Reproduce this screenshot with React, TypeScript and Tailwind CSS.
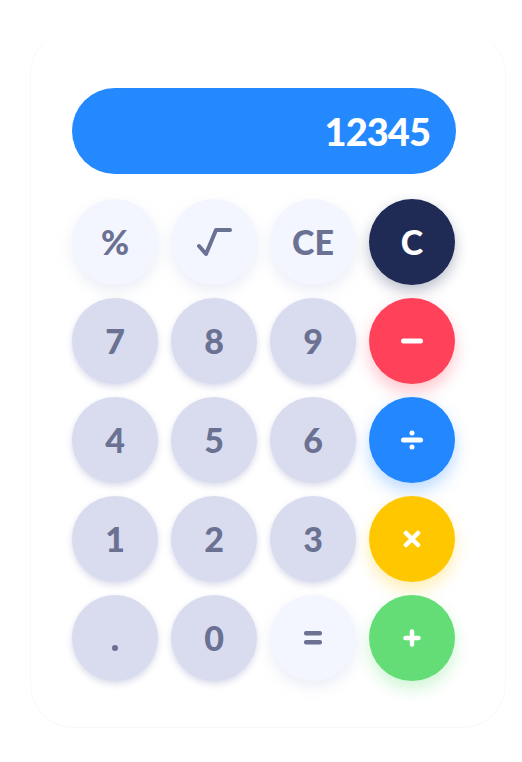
import React from "react";

type Key = {
  label: React.ReactNode;
  kind: "light" | "digit" | "dark" | "red" | "blue" | "yellow" | "green";
};

const kindClass: Record<Key["kind"], string> = {
  light: "bg-[#f3f6ff] text-[#6b7192] shadow-[0_6px_14px_rgba(180,188,220,0.25)]",
  digit: "bg-[#d8dcee] text-[#6b7192] shadow-[0_3px_6px_rgba(170,176,210,0.45)]",
  dark: "bg-[#1f2a55] text-white shadow-[0_6px_14px_rgba(31,42,85,0.3)]",
  red: "bg-[#ff4159] text-white shadow-[0_8px_16px_rgba(255,65,89,0.3)]",
  blue: "bg-[#2388ff] text-white shadow-[0_8px_16px_rgba(35,136,255,0.3)]",
  yellow: "bg-[#ffc700] text-white shadow-[0_8px_16px_rgba(255,199,0,0.3)]",
  green: "bg-[#64dd76] text-white shadow-[0_8px_16px_rgba(100,221,118,0.3)]",
};

const Sqrt = () => (
  <svg width="37" height="30" viewBox="0 0 37 30" fill="none" stroke="currentColor" strokeWidth="4" strokeLinecap="round" strokeLinejoin="round">
    <path d="M3 19 L10 27 L20 3 H34" />
  </svg>
);

const Minus = () => (
  <svg width="22" height="6" viewBox="0 0 22 6">
    <rect x="0" y="0.5" width="22" height="5" rx="2.5" fill="currentColor" />
  </svg>
);

const Divide = () => (
  <svg width="22" height="20" viewBox="0 0 22 20" fill="currentColor">
    <circle cx="11" cy="3" r="2.5" />
    <rect x="0" y="7.5" width="22" height="5" rx="2.5" />
    <circle cx="11" cy="17" r="2.5" />
  </svg>
);

const Times = () => (
  <svg width="18" height="18" viewBox="0 0 18 18" fill="none" stroke="currentColor" strokeWidth="4.5" strokeLinecap="round">
    <path d="M3 3 L15 15 M15 3 L3 15" />
  </svg>
);

const Plus = () => (
  <svg width="18" height="18" viewBox="0 0 18 18" fill="none" stroke="currentColor" strokeWidth="4.5" strokeLinecap="round">
    <path d="M9 2.5 V15.5 M2.5 9 H15.5" />
  </svg>
);

const Equals = () => (
  <svg width="18" height="14" viewBox="0 0 18 14" fill="currentColor">
    <rect x="0" y="0" width="18" height="4.5" rx="2" />
    <rect x="0" y="9" width="18" height="4.5" rx="2" />
  </svg>
);

const Dot = () => (
  <span className="mt-[20px] block h-[6px] w-[6px] rounded-full bg-current" />
);

const keys: Key[] = [
  { label: "%", kind: "light" },
  { label: <Sqrt />, kind: "light" },
  { label: "CE", kind: "light" },
  { label: "C", kind: "dark" },
  { label: "7", kind: "digit" },
  { label: "8", kind: "digit" },
  { label: "9", kind: "digit" },
  { label: <Minus />, kind: "red" },
  { label: "4", kind: "digit" },
  { label: "5", kind: "digit" },
  { label: "6", kind: "digit" },
  { label: <Divide />, kind: "blue" },
  { label: "1", kind: "digit" },
  { label: "2", kind: "digit" },
  { label: "3", kind: "digit" },
  { label: <Times />, kind: "yellow" },
  { label: <Dot />, kind: "digit" },
  { label: "0", kind: "digit" },
  { label: <Equals />, kind: "light" },
  { label: <Plus />, kind: "green" },
];

export default function App() {
  return (
    <div className="min-h-[762px] w-full bg-white font-['Lato','Noto_Sans',sans-serif]">
      <div className="pt-[30px] pl-[30px]">
        <div className="w-[476px] rounded-[44px] border border-[#f8f8fa] border-t-transparent pt-[57px] pb-[46px] pl-[41px]">
          <div className="flex h-[86px] w-[384px] items-center justify-end rounded-full bg-[#2488ff] pr-[26px] text-[38px] font-black tracking-tight text-white">
            12345
          </div>
          <div className="mt-[25px] grid w-[384px] grid-cols-[repeat(4,86px)] gap-[13px]">
            {keys.map((k, i) => (
              <button
                key={i}
                className={`flex h-[86px] w-[86px] items-center justify-center rounded-full text-[34px] font-black leading-none ${kindClass[k.kind]}`}
              >
                {k.label}
              </button>
            ))}
          </div>
        </div>
      </div>
    </div>
  );
}
